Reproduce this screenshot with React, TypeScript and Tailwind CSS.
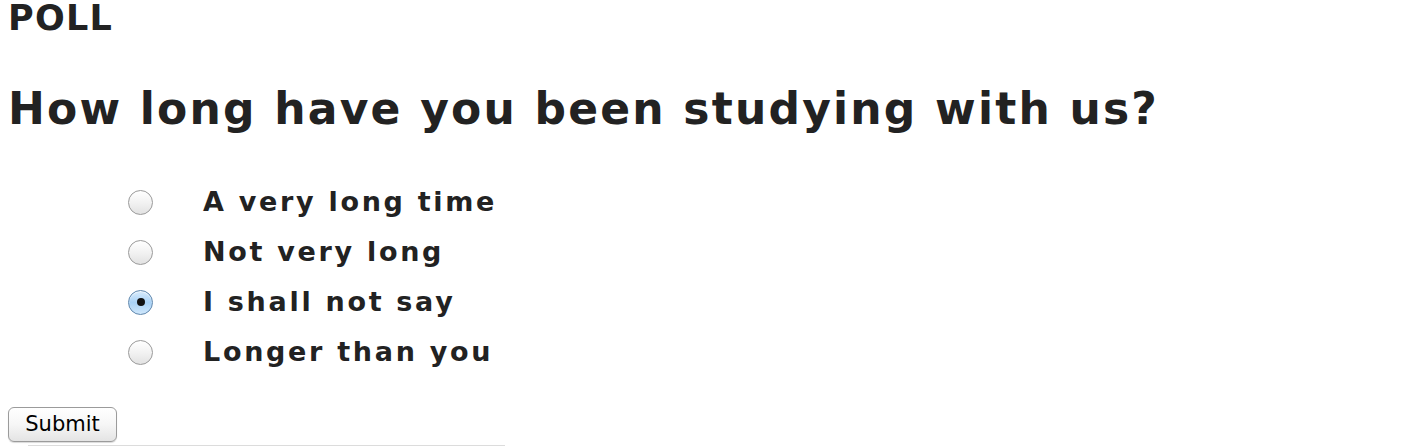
const options = [
  { label: "A very long time", checked: false },
  { label: "Not very long", checked: false },
  { label: "I shall not say", checked: true },
  { label: "Longer than you", checked: false },
];

function Radio({ checked }: { checked: boolean }) {
  if (checked) {
    return (
      <span className="flex h-[25px] w-[25px] items-center justify-center rounded-full border border-[#5f87ad] bg-gradient-to-b from-[#d9ecfc] via-[#a9d2f6] to-[#cfe7fb] shadow-[inset_0_1px_1px_rgba(255,255,255,0.8)]">
        <span className="h-[8px] w-[8px] rounded-full bg-[#111]" />
      </span>
    );
  }
  return (
    <span className="block h-[25px] w-[25px] rounded-full border border-[#9a9a9a] bg-gradient-to-b from-white via-[#f2f2f2] to-[#e2e2e2]" />
  );
}

export default function App() {
  return (
    <div className="relative h-[447px] overflow-hidden bg-white px-[8px] text-[#222] font-['DejaVu_Sans','Verdana',sans-serif]">
      <h3 className="text-[35px] font-bold leading-[36px] tracking-[1.3px]">POLL</h3>
      <h1 className="mt-[47px] text-[44px] font-bold leading-[52px] tracking-[2.2px]">
        How long have you been studying with us?
      </h1>
      <ul className="mt-[42px] pl-[120px]">
        {options.map((o) => (
          <li key={o.label} className="flex h-[50px] items-center">
            <Radio checked={o.checked} />
            <span className="ml-[50px] text-[27px] font-bold leading-[50px] tracking-[2.7px]">
              {o.label}
            </span>
          </li>
        ))}
      </ul>
      <button className="mt-[30px] h-[35px] w-[109px] rounded-[6px] border border-[#9b9b9b] bg-gradient-to-b from-white via-[#f6f6f6] to-[#e4e4e4] text-[21px] leading-[33px] text-black shadow-[0_1px_1px_rgba(0,0,0,0.15)] font-['DejaVu_Sans',sans-serif]">
        Submit
      </button>
      <div className="ml-[20px] mt-[3px] h-px w-[477px] bg-[#dcdcdc]" />
    </div>
  );
}
